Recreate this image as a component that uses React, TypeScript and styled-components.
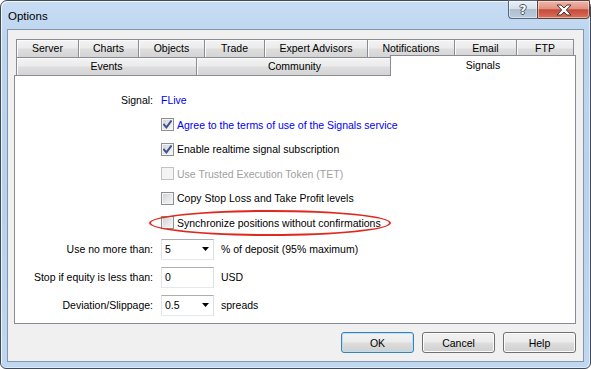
import React from 'react';
import styled, { createGlobalStyle, css } from 'styled-components';

const GlobalStyle = createGlobalStyle`
  html, body {
    margin: 0;
    padding: 0;
    background: #ffffff;
  }
  body {
    font-family: "Liberation Sans", Arial, sans-serif;
    font-size: 10.5px;
    color: #000;
  }
  * {
    box-sizing: border-box;
  }
`;

const rowOneTabs = [
  { label: 'Server', width: 63 },
  { label: 'Charts', width: 61 },
  { label: 'Objects', width: 67 },
  { label: 'Trade', width: 61 },
  { label: 'Expert Advisors', width: 104 },
  { label: 'Notifications', width: 88 },
  { label: 'Email', width: 63 },
  { label: 'FTP', width: 58 },
];

const rowTwoTabs = [
  { label: 'Events', width: 181 },
  { label: 'Community', width: 197 },
  { label: 'Signals', width: 186, selected: true },
];

const App: React.FC = () => {
  return (
    <>
      <GlobalStyle />
      <Window>
        <TitleBar>
          <Title>Options</Title>
          <CaptionButtons>
            <CaptionButton $kind="help">
              <HelpGlyph>?</HelpGlyph>
            </CaptionButton>
            <CaptionButton $kind="close">
              <svg width="16" height="12" viewBox="0 0 16 12">
                <path
                  d="M1 1 L5 1 L8 4 L11 1 L15 1 L10.3 6 L15 11 L11 11 L8 8 L5 11 L1 11 L5.7 6 Z"
                  fill="#ffffff"
                  stroke="#4b3530"
                  strokeWidth="1"
                  strokeLinejoin="round"
                />
              </svg>
            </CaptionButton>
          </CaptionButtons>
        </TitleBar>

        <Client>
          <TabControl>
            <TabRow>
              {rowOneTabs.map((t) => (
                <Tab key={t.label} $width={t.width}>
                  {t.label}
                </Tab>
              ))}
            </TabRow>
            <TabRow>
              {rowTwoTabs.map((t) => (
                <Tab key={t.label} $width={t.width} $selected={t.selected}>
                  {t.label}
                </Tab>
              ))}
            </TabRow>

            <Panel>
              <Row $h={24}>
                <RowLabel>Signal:</RowLabel>
                <LinkText>FLive</LinkText>
              </Row>

              <Row $h={25}>
                <RowLabel />
                <CheckBox checked />
                <CheckText $blue>Agree to the terms of use of the Signals service</CheckText>
              </Row>
              <Row $h={24}>
                <RowLabel />
                <CheckBox checked />
                <CheckText>Enable realtime signal subscription</CheckText>
              </Row>
              <Row $h={25}>
                <RowLabel />
                <CheckBox disabled />
                <CheckText $disabled>Use Trusted Execution Token (TET)</CheckText>
              </Row>
              <Row $h={24}>
                <RowLabel />
                <CheckBox />
                <CheckText>Copy Stop Loss and Take Profit levels</CheckText>
              </Row>
              <Row $h={25}>
                <RowLabel />
                <CheckBox />
                <CheckText>Synchronize positions without confirmations</CheckText>
                <Highlight />
              </Row>

              <Row $h={28}>
                <RowLabel>Use no more than:</RowLabel>
                <Combo>
                  <span>5</span>
                  <DropArrow />
                </Combo>
                <Suffix>% of deposit (95% maximum)</Suffix>
              </Row>
              <Row $h={28}>
                <RowLabel>Stop if equity is less than:</RowLabel>
                <TextInput>0</TextInput>
                <Suffix>USD</Suffix>
              </Row>
              <Row $h={28}>
                <RowLabel>Deviation/Slippage:</RowLabel>
                <Combo>
                  <span>0.5</span>
                  <DropArrow />
                </Combo>
                <Suffix>spreads</Suffix>
              </Row>
            </Panel>
          </TabControl>

          <ButtonBar>
            <Button $default>OK</Button>
            <Button>Cancel</Button>
            <Button>Help</Button>
          </ButtonBar>
        </Client>
      </Window>
    </>
  );
};

const CheckBox: React.FC<{ checked?: boolean; disabled?: boolean }> = ({ checked, disabled }) => (
  <Box $disabled={disabled}>
    {checked && (
      <svg width="9" height="9" viewBox="0 0 9 9">
        <path
          d="M1 4.6 L3.4 7.4 L8 1.2"
          fill="none"
          stroke="#3d5190"
          strokeWidth="1.9"
          strokeLinecap="square"
        />
      </svg>
    )}
  </Box>
);

const DropArrow: React.FC = () => (
  <svg width="7" height="4" viewBox="0 0 7 4">
    <path d="M0 0 L7 0 L3.5 4 Z" fill="#000" />
  </svg>
);

const Window = styled.div`
  width: 591px;
  height: 369px;
  display: flex;
  flex-direction: column;
  padding: 0 6px 6px;
  border: 1px solid #414b58;
  border-radius: 7px 7px 6px 6px;
  background: linear-gradient(180deg, #c8ddf4 0%, #bdd5ef 10%, #b8d1ec 55%, #bfd7f1 100%);
  box-shadow: inset 1px 1px 0 rgba(255, 255, 255, 0.75), inset -1px -1px 0 rgba(255, 255, 255, 0.5);
`;

const TitleBar = styled.div`
  height: 28px;
  display: flex;
  align-items: flex-start;
  justify-content: space-between;
`;

const Title = styled.div`
  align-self: center;
  padding-left: 1px;
  margin-top: 2px;
  font-size: 11.5px;
  color: #000;
`;

const CaptionButtons = styled.div`
  display: flex;
  margin-top: -1px;
  margin-right: -6px;
`;

const CaptionButton = styled.div<{ $kind: 'help' | 'close' }>`
  height: 19px;
  display: flex;
  align-items: center;
  justify-content: center;
  border: 1px solid #56667a;
  ${({ $kind }) =>
    $kind === 'help'
      ? css`
          width: 29px;
          border-right: none;
          border-radius: 0 0 0 4px;
          background: linear-gradient(180deg, #eaf0f6 0%, #d6e0ea 45%, #aebfd0 50%, #bccbdb 100%);
        `
      : css`
          width: 53px;
          border-color: #5b3f3a;
          border-radius: 0 0 4px 0;
          background: linear-gradient(180deg, #eeb7aa 0%, #df9282 45%, #c8493a 52%, #d7735a 100%);
        `}
  box-shadow: inset 0 0 0 1px rgba(255, 255, 255, 0.45);
`;

const HelpGlyph = styled.span`
  font-family: "DejaVu Sans", sans-serif;
  font-weight: bold;
  font-size: 12px;
  line-height: 12px;
  color: #ffffff;
  text-shadow: 1px 0 0 #4a5566, -1px 0 0 #4a5566, 0 1px 0 #4a5566, 0 -1px 0 #4a5566;
`;

const Client = styled.div`
  flex: 1;
  border: 1px solid #8496ab;
  background: #f0f0f0;
  padding: 9px 0 0 6px;
`;

const TabControl = styled.div`
  width: 562px;
`;

const TabRow = styled.div`
  display: flex;
  height: 18px;
  padding-left: 2px;
`;

const Tab = styled.div<{ $width: number; $selected?: boolean }>`
  width: ${({ $width }) => $width}px;
  height: 18px;
  flex-shrink: 0;
  margin-right: -1px;
  border: 1px solid #898c95;
  border-bottom: none;
  background: linear-gradient(180deg, #f3f3f3 0%, #ebebeb 48%, #dedede 52%, #d4d4d4 100%);
  box-shadow: inset 1px 1px 0 #fbfbfb;
  text-align: center;
  line-height: 16px;
  white-space: nowrap;
  ${({ $selected }) =>
    $selected &&
    css`
      position: relative;
      z-index: 2;
      height: 21px;
      margin-top: -2px;
      margin-left: -2px;
      padding-top: 2px;
      line-height: 14px;
      background: #ffffff;
      box-shadow: none;
    `}
`;

const Panel = styled.div`
  height: 249px;
  border: 1px solid #898c95;
  background: #ffffff;
  padding-top: 12px;
`;

const Row = styled.div<{ $h: number }>`
  position: relative;
  display: flex;
  align-items: center;
  height: ${({ $h }) => $h}px;
`;

const RowLabel = styled.div`
  width: 138px;
  flex-shrink: 0;
  margin-right: 8px;
  text-align: right;
  white-space: nowrap;
`;

const LinkText = styled.span`
  color: #0000f0;
`;

const Box = styled.span<{ $disabled?: boolean }>`
  width: 13px;
  height: 13px;
  flex-shrink: 0;
  display: flex;
  align-items: center;
  justify-content: center;
  border: 1px solid ${({ $disabled }) => ($disabled ? '#c2c2c2' : '#8e8f8f')};
  background: ${({ $disabled }) =>
    $disabled ? '#f4f4f4' : 'linear-gradient(135deg, #cdd1d6 0%, #e6e7e9 55%, #f7f7f7 100%)'};
  box-shadow: inset 0 0 0 1px #f4f4f4;
`;

const CheckText = styled.span<{ $blue?: boolean; $disabled?: boolean }>`
  margin-left: 3px;
  white-space: nowrap;
  color: ${({ $blue, $disabled }) => ($blue ? '#0000f0' : $disabled ? '#a0a0a0' : '#000')};
`;

const Highlight = styled.div`
  position: absolute;
  left: 134px;
  top: 0;
  width: 242px;
  height: 26px;
  border: 2px solid #e0281e;
  border-radius: 50%;
  pointer-events: none;
`;

const fieldBox = css`
  width: 53px;
  height: 21px;
  flex-shrink: 0;
  display: flex;
  align-items: center;
  padding: 0 4px 0 3px;
  border: 1px solid;
  border-color: #abadb3 #dbdfe6 #e3e9ef #e2e3ea;
  background: #ffffff;
`;

const Combo = styled.div`
  ${fieldBox}
  justify-content: space-between;
`;

const TextInput = styled.div`
  ${fieldBox}
`;

const Suffix = styled.span`
  margin-left: 7px;
  white-space: nowrap;
`;

const ButtonBar = styled.div`
  width: 562px;
  margin-top: 8px;
  display: flex;
  justify-content: flex-end;
  gap: 8px;
`;

const Button = styled.button<{ $default?: boolean }>`
  width: 73px;
  height: 21px;
  padding: 0;
  font-family: inherit;
  font-size: 10.5px;
  color: #000;
  border: 1px solid #707070;
  border-radius: 3px;
  background: linear-gradient(180deg, #f2f2f2 0%, #ebebeb 48%, #dddddd 52%, #cfcfcf 100%);
  box-shadow: inset 0 0 0 1px #fbfbfb;
  ${({ $default }) =>
    $default &&
    css`
      border-color: #3c7fb1;
      box-shadow: inset 0 0 0 1px #b6e2f8;
    `}
`;

export default App;
